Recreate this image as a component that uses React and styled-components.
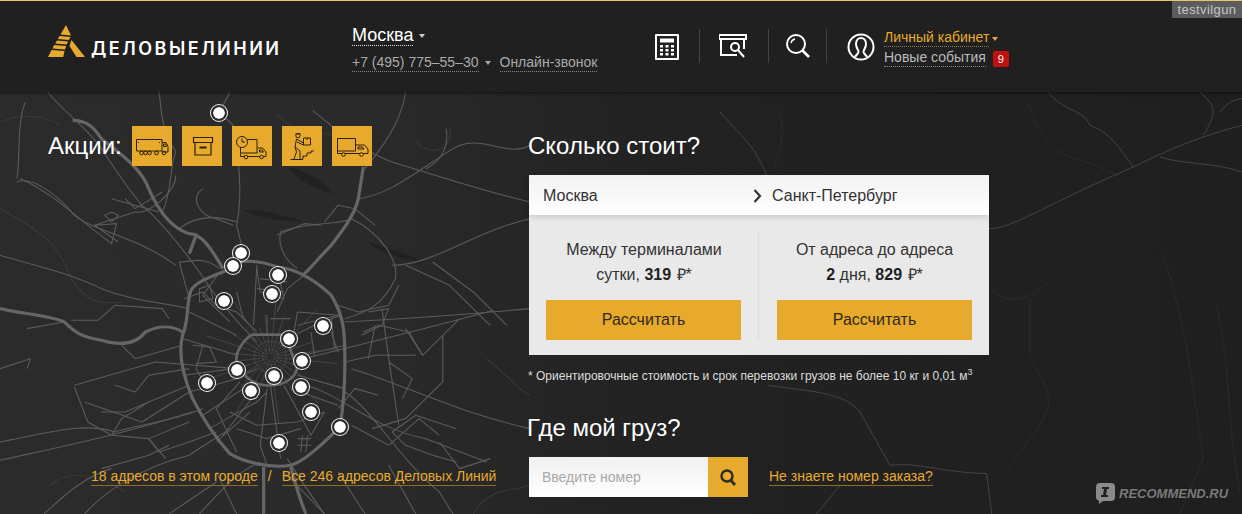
import styled, { createGlobalStyle } from 'styled-components';

const GlobalStyle = createGlobalStyle`
  html, body {
    margin: 0;
    padding: 0;
    background: #212121;
  }
  * {
    box-sizing: border-box;
  }
`

const Page = styled.div`
  position: relative;
  width: 1242px;
  height: 514px;
  overflow: hidden;
  font-family: "Liberation Sans", Arial, sans-serif;
  background: linear-gradient(90deg, #2b2b2b 0%, #2a2a2a 30%, #222 52%, #1f1f1f 100%);
`

const MapLayer = styled.svg`
  position: absolute;
  left: 0;
  top: 0;
  width: 1242px;
  height: 514px;
`

const Pin = styled.span`
  position: absolute;
  left: ${(p) => p.$x - 8}px;
  top: ${(p) => p.$y - 8}px;
  width: 16px;
  height: 16px;
  border-radius: 50%;
  background: #fff;
  background-clip: padding-box;
  border: 2px solid #2c2c2c;
  box-shadow: 0 0 0 1px #f0f0f0;
`

const Header = styled.header`
  position: relative;
  display: flex;
  align-items: flex-start;
  height: 92px;
  padding-left: 48px;
  background: #202020;
  border-top: 1px solid #e8c66e;
  box-shadow: 0 1px 3px rgba(0, 0, 0, 0.6);
`

const Logo = styled.div`
  display: flex;
  align-items: flex-end;
  gap: 5px;
  width: 304px;
  padding-top: 24px;
`

const LogoText = styled.span`
  font-family: Inter, "Liberation Sans", sans-serif;
  font-size: 18px;
  font-weight: 600;
  line-height: 18px;
  letter-spacing: 2.5px;
  color: #fff;
`

const CityBlock = styled.div`
  display: flex;
  flex-direction: column;
  width: 303px;
  padding-top: 23px;
`

const CityRow = styled.div`
  display: flex;
  align-items: center;
  gap: 6px;
  height: 23px;
`

const City = styled.span`
  font-size: 18px;
  line-height: 20px;
  color: #fff;
  border-bottom: 1px dotted #ddd;
`

const Caret = styled.span`
  width: 0;
  height: 0;
  margin-top: 1px;
  border-left: 3px solid transparent;
  border-right: 3px solid transparent;
  border-top: 4px solid ${(p) => p.$color || '#ccc'};
`

const PhoneRow = styled.div`
  display: flex;
  align-items: center;
  margin-top: 7px;
`

const Dotted = styled.span`
  font-size: 14px;
  line-height: 17px;
  color: ${(p) => p.$color || '#aaa'};
  border-bottom: 1px dotted ${(p) => p.$line || '#888'};
`

const PhoneCaret = styled(Caret)`
  margin: 0 9px 0 6px;
`

const Tools = styled.div`
  display: flex;
  align-items: flex-start;
  padding-top: 28px;
`

const ToolIcon = styled.svg`
  display: block;
  margin-top: ${(p) => p.$top || 5}px;
  color: #fff;
`

const ToolDivider = styled.span`
  width: 1px;
  height: 34px;
  background: #444;
  margin: 0 ${(p) => p.$right}px 0 ${(p) => p.$left}px;
`

const UserBlock = styled.div`
  display: flex;
  gap: 9px;
  margin-left: 20px;
`

const UserText = styled.div`
  display: flex;
  flex-direction: column;
  gap: 2px;
`

const UserRow = styled.div`
  display: flex;
  align-items: center;
  gap: 3px;
`

const Badge = styled.span`
  display: block;
  width: 16px;
  height: 16px;
  margin-left: 4px;
  margin-top: 2px;
  border-radius: 2px;
  background: #c40f0f;
  color: #fff;
  font-size: 11px;
  line-height: 16px;
  text-align: center;
`

const Main = styled.main`
  position: relative;
  display: grid;
  grid-template-columns: 480px 461px;
  height: 422px;
  padding: 34px 0 0 48px;
`

const LeftColumn = styled.section`
  display: flex;
  flex-direction: column;
  justify-content: space-between;
  height: 360px;
`

const PromoRow = styled.div`
  display: flex;
  align-items: center;
  gap: 10px;
`

const Title = styled.h2`
  margin: 0;
  font-size: 24px;
  font-weight: 400;
  line-height: 40px;
  color: #fff;
`

const PromoTitle = styled(Title)`
  width: 74px;
`

const PromoTile = styled.a`
  display: block;
  width: 40px;
  height: 40px;
  background: #e8aa2c;
  color: #2a2110;
`

const LinksRow = styled.div`
  display: flex;
  align-items: flex-start;
  gap: 10px;
  margin-left: 43px;
  font-size: 14px;
  line-height: 17px;
  color: #e8aa2c;
`

const AddressLink = styled.a`
  color: #e8aa2c;
  border-bottom: 1px solid #8f6c24;
`

const RightColumn = styled.section`
  display: flex;
  flex-direction: column;
`

const Card = styled.div`
  width: 460px;
  height: 180px;
  margin: 9px 0 0 1px;
  background: #e9e9e9;
`

const RouteRow = styled.div`
  position: relative;
  display: grid;
  grid-template-columns: 210px 1fr;
  height: 40px;
  padding: 1px 0 0 14px;
  align-items: center;
  font-size: 16px;
  color: #333;
  background: linear-gradient(180deg, #f2f2f2 0%, #fff 100%);
  box-shadow: 0 2px 6px rgba(0, 0, 0, 0.14);
`

const RouteTo = styled.div`
  display: flex;
  align-items: center;
  gap: 10px;
`

const Variants = styled.div`
  display: grid;
  grid-template-columns: 230px 230px;
  height: 140px;
`

const Variant = styled.div`
  padding: 22px 17px 0 ${(p) => (p.$last ? 18 : 17)}px;
  text-align: center;
  font-size: 16px;
  line-height: 25px;
  color: #333;
  ${(p) => !p.$last && 'background: linear-gradient(#dcdcdc, #dcdcdc) no-repeat right 15px / 1px 110px;'}
`

const Price = styled.b`
  color: #222;
`

const Ruble = styled.span`
  font-weight: 400;
  margin-left: 1px;
`

const CalcButton = styled.button`
  display: block;
  width: 195px;
  height: 40px;
  margin-top: 13px;
  padding: 0;
  border: 0;
  border-radius: 0;
  background: #e8aa2c;
  font-family: inherit;
  font-size: 16px;
  color: #33291a;
`

const Note = styled.p`
  margin: 14px 0 0;
  font-size: 12px;
  line-height: 14px;
  color: #ddd;
  white-space: nowrap;
  sup {
    font-size: 9px;
    line-height: 0;
  }
`

const TrackTitle = styled(Title)`
  margin: 29px 0 0 -1px;
  line-height: 32px;
`

const TrackRow = styled.div`
  display: flex;
  align-items: center;
  margin: 13px 0 0 1px;
`

const TrackInput = styled.input`
  width: 179px;
  height: 40px;
  padding: 0 13px;
  border: 0;
  border-radius: 0;
  outline: 0;
  background: linear-gradient(180deg, #f0f0f0 0%, #fff 100%);
  font-family: inherit;
  font-size: 14px;
  color: #333;
  &::placeholder {
    color: #a8a8a8;
    opacity: 1;
  }
`

const TrackButton = styled.button`
  display: flex;
  align-items: center;
  justify-content: center;
  width: 40px;
  height: 40px;
  padding: 0;
  border: 0;
  background: #e8aa2c;
`

const OrderLink = styled(AddressLink)`
  margin-left: 21px;
  font-size: 14px;
  line-height: 17px;
`

const UserTag = styled.div`
  position: absolute;
  right: 0;
  top: 1px;
  width: 70px;
  height: 17px;
  background: #5c5c5c;
  color: #c4c4c4;
  font-size: 13px;
  line-height: 17px;
  letter-spacing: 0.4px;
  text-align: center;
`

const Watermark = styled.div`
  position: absolute;
  left: 1095px;
  top: 482px;
  display: flex;
  align-items: center;
  gap: 3px;
  font-size: 13px;
  font-weight: 700;
  font-style: italic;
  line-height: 20px;
  color: #7a7a7a;
`

const pins = [
  [219, 113], [241, 253], [233, 266], [278, 275], [272, 294], [224, 301],
  [323, 326], [289, 339], [302, 361], [237, 370], [274, 376], [301, 387],
  [207, 383], [251, 391], [311, 412], [340, 427], [279, 443],
]

// coordinates below are traced from the picture, scaled up about 3x
const thickRoads = [
  'M660,540 C620,555 580,570 565,595 C550,640 560,680 540,730 C525,790 545,860 570,920 C600,980 640,1040 680,1085 C720,1110 800,1130 860,1120 C900,1110 960,1050 1006,1005 C1015,950 1022,880 1020,780 C1020,700 1010,660 980,610 C940,570 880,530 820,525 C780,510 740,505 710,510 C690,520 680,530 660,540',
  'M215,85 C260,85 280,110 300,140 C350,180 420,230 440,290 C470,360 510,410 560,425 C600,425 630,480 660,530',
  'M0,650 C60,665 150,670 190,690 C220,720 240,735 300,745 C350,760 400,760 430,720 C470,700 510,700 540,720',
  'M780,1125 L780,1266',
  'M860,1125 C875,1180 890,1230 905,1266',
  'M582,425 L560,485',
  'M1075,225 L1060,320 C1050,370 1010,420 980,460 C940,500 920,530 895,550',
]

const innerRing = 'M745,728 L840,728 C860,760 860,790 880,820 C880,850 850,880 800,880 C760,885 720,860 700,810 C695,780 720,745 745,728'

const thinRoads = [
  'M680,0 L650,60 L690,100 C705,200 720,300 700,400 L720,480',
  'M140,0 C200,70 260,110 300,170 C340,230 370,280 420,340 C480,390 540,470 590,540 C640,620 690,680 760,750',
  'M470,0 C480,50 470,100 520,180 C500,230 510,300 480,360',
  'M1200,0 C1190,60 1170,120 1080,230',
  'M925,55 C1000,120 1080,180 1160,210 C1260,240 1400,290 1568,330',
  'M1060,320 C1150,310 1230,240 1340,170 C1420,120 1500,200 1568,160',
  'M1020,690 C1200,680 1350,670 1568,650',
  'M900,800 C1100,750 1300,700 1460,655',
  'M0,490 C100,520 200,540 300,590 C400,630 480,630 560,650',
  'M0,1105 C200,1060 350,1030 570,960',
  'M250,1266 C300,1210 400,1130 560,1090 C600,1060 640,1040 680,1010',
  'M0,1050 C150,1020 250,990 340,1020 C400,1000 500,990 600,950',
  'M220,880 L460,810 L700,830',
  'M80,830 L90,800 L0,830',
  'M50,270 C100,250 180,320 220,370 C280,420 400,430 520,520',
  'M75,30 C50,90 60,200 50,260',
  'M1160,520 C1280,520 1400,420 1568,380',
  'M1020,900 C1100,950 1180,1100 1300,1200 L1340,1266',
  'M1040,830 C1200,880 1350,960 1568,1010',
  'M900,880 C1000,900 1100,1010 1260,1040 L1440,1110',
  'M1040,380 C1000,400 900,390 830,420 C820,470 850,510 880,530',
  'M1040,380 C1120,420 1180,500 1170,560 C1130,640 1090,660 1020,680',
  'M700,390 C640,370 580,370 530,410',
  'M600,290 C560,320 590,370 640,380 L690,400',
  'M520,250 C520,300 440,370 400,360 L280,400 L350,450',
  'M220,885 L260,990 L330,1030 L440,1040 L490,1100',
  'M250,930 L420,990 L560,900',
  'M1310,730 L1310,870 L1200,980 L1100,1010',
  'M1130,650 L1150,800 L1180,1000',
  'M1075,720 L1120,700 L1210,720 L1250,790',
  'M980,720 L1000,780 M880,700 L1000,670',
  'M650,530 C600,490 570,510 530,510 L560,620',
  'M760,520 L750,700 M790,670 L790,730 M860,680 L800,680',
  'M820,660 L850,590 L900,550',
  'M790,1120 L770,1060 L790,890',
  'M800,880 L830,1100 M840,880 L920,1030 L960,960',
  'M880,1040 L920,1040 M880,1060 L920,1060 M895,1030 L890,1080 M910,1030 L905,1080',
  'M700,1080 L640,950 L710,870',
  'M660,1030 L760,900',
  'M1000,950 L1050,890 L1120,910 M1160,1020 L1230,970 L1350,1010',
  'M1300,1050 L1360,1130 L1450,1100',
  'M440,1040 L560,990',
  'M130,1266 C200,1200 260,1150 330,1130',
  'M590,1266 C650,1200 700,1140 770,1110',
  'M960,1266 C920,1210 880,1150 850,1100',
  'M545,620 L600,600 L640,640 L700,660 L740,700',
  'M560,660 L700,730',
  'M540,740 L640,770 L700,790',
  'M600,760 L580,830 L620,900',
  'M545,850 L690,830',
  'M560,900 L700,860 L760,830',
  'M600,970 L720,890',
  'M620,1010 L760,930 L790,900',
  'M640,1050 L740,960',
  'M680,960 L760,1000 L880,990 L960,960',
  'M700,1010 L790,1040 L890,1010',
  'M860,890 L1000,940',
  'M880,850 L1020,890',
  'M900,790 L1020,760',
  'M850,740 L950,690 L1010,670',
  'M870,720 L880,660 L1005,670',
  'M920,720 L930,790 M980,680 L990,770',
  'M760,530 L770,600 L840,620 L820,530',
  'M770,560 L850,570 M760,590 L840,600',
  'M650,540 L600,610 L680,690',
  'M590,590 L620,580 L630,620 L590,630 Z',
  'M700,600 L720,680 L760,720',
  'M570,760 L620,765 L640,810 L580,815',
  'M60,260 C130,290 200,350 260,400 L330,455 L345,395 L280,400',
  'M310,370 L330,390 L350,370 L330,360 Z',
  'M370,320 L400,350 L480,300 M330,320 L470,360',
  'M210,685 L290,685 L340,640 L480,650 L500,680',
  'M80,710 L190,690',
  'M360,760 L400,800 L540,760',
  'M340,880 L400,900 L440,850 L560,830',
  'M300,960 L370,960 L440,930 L560,880',
  'M330,1030 L360,980 L440,930',
  'M440,1040 L470,1080 L560,1050 L640,1020',
  'M300,1130 L440,1090 L500,1060',
  'M1070,730 L1130,700 L1150,650 L1090,660',
  'M1020,810 L1110,790 L1230,790',
  'M1090,800 L1110,700',
  'M1200,710 L1250,790 L1310,730 L1360,680',
  'M1150,810 L1220,860 L1190,920',
  'M1040,1000 L1150,1060 L1240,980 L1300,1030',
  'M1160,1020 L1200,1060 L1280,1090 L1350,1110',
  'M960,390 L1000,340 L1050,350 L1110,400',
  'M820,430 L900,395 L950,400',
  'M1200,520 L1330,580 L1450,700',
  'M1280,510 L1400,600 L1500,700',
  'M1320,110 C1330,170 1300,210 1260,230',
  'M1000,640 L1060,660 L1150,640 L1180,580',
  'M640,1140 L700,1266',
  'M840,1140 L960,1266',
  'M500,1266 L640,1170',
  'M1000,1140 L1080,1266',
  'M1150,1120 L1230,1266',
]

const darkLines = [
  'M850,225 C900,235 950,260 985,305 C930,290 880,265 850,225',
  'M720,355 C770,345 830,375 900,385 C860,392 770,380 720,355',
  'M1090,450 C1140,470 1200,480 1250,510 C1190,505 1120,480 1090,450',
]

const faintLines = [
  'M0,350 C90,400 170,440 210,560 C250,620 280,640 360,630',
  'M0,90 C50,70 110,60 180,100',
  'M820,70 C880,130 960,110 1000,140',
  'M1330,110 C1340,170 1280,200 1230,150',
  'M150,1180 C200,1130 300,1150 370,1200',
  'M1400,1266 C1450,1180 1520,1200 1568,1180',
  'M1440,800 C1500,850 1540,900 1568,910',
]

const eastRoads = [
  'M805,410 C880,410 950,350 1240,225 C1350,170 1450,130 1566,100',
  'M985,0 C1030,60 1090,50 1110,100 C1170,120 1200,170 1240,225',
  'M1440,0 C1480,40 1500,50 1450,130',
  'M1500,60 C1530,20 1566,20 1570,20',
  'M1320,195 C1400,220 1480,210 1566,240',
  'M145,880 C280,900 370,900 420,960 L510,1120',
  'M510,1120 C600,1110 650,1140 800,1145 L815,1266',
  'M360,1180 L290,1266',
  'M0,60 C50,120 100,150 140,250',
]

const eastFaint = [
  'M1330,490 C1400,700 1420,900 1450,1100 L1380,1266',
  'M810,590 C880,660 960,600 1030,530',
  'M930,620 L930,800 C980,880 1010,920 960,1000 L850,1150',
  'M1490,640 C1530,800 1520,1000 1560,1200',
  'M180,70 C200,120 170,200 160,240',
  'M920,30 C960,120 980,170 1060,200 C1120,210 1160,240 1200,250',
]

const spokes = Array.from({ length: 28 }, (_, i) => {
  const a = (i / 28) * Math.PI * 2 + 0.1
  const r1 = i % 2 ? 30 : 10
  const r2 = i % 3 === 0 ? 200 : i % 2 ? 95 : 130
  return `M${800 + Math.cos(a) * r1},${795 + Math.sin(a) * r1} L${800 + Math.cos(a) * r2},${795 + Math.sin(a) * r2}`
})

function RoadMap() {
  return (
    <MapLayer viewBox="0 0 1242 514">
      <g transform="translate(0 92) scale(0.338 0.3333)" fill="none" strokeLinejoin="round">
        {darkLines.map((d) => <path key={d} d={d} fill="#212121" />)}
        {faintLines.map((d) => <path key={d} d={d} stroke="#3a3a3a" strokeWidth="3" />)}
        <g stroke="#5c5c5c" strokeWidth="3.2">
          {thinRoads.map((d) => <path key={d} d={d} />)}
        </g>
        <g stroke="#4c4c4c" strokeWidth="2.500">
          {spokes.map((d) => <path key={d} d={d} />)}
          <circle cx="800" cy="795" r="48" />
          <circle cx="800" cy="795" r="24" />
        </g>
        <g stroke="#666" strokeWidth="9.500">
          {thickRoads.map((d) => <path key={d} d={d} />)}
        </g>
        <path d={innerRing} stroke="#666" strokeWidth="8" />
      </g>
      <g transform="translate(720 92) scale(0.3333)" fill="none">
        {eastFaint.map((d) => <path key={d} d={d} stroke="#2b2b2b" strokeWidth="3" />)}
        {eastRoads.map((d) => <path key={d} d={d} stroke="#444" strokeWidth="3" />)}
      </g>
    </MapLayer>
  )
}

function LogoMark() {
  return (
    <svg width="38" height="33" viewBox="0 0 38 33" fill="#e8aa2c">
      <polygon points="18,0 12.5,9.5 23,10.5" />
      <polygon points="11.5,11 22.5,12 20.8,15 9.8,14" />
      <polygon points="9,15.5 20,16.5 18.7,19.5 7.2,18.5" />
      <polygon points="6.2,20 18.2,21 17,24.5 4.5,23.5" />
      <polygon points="3.6,25 16.5,26 15.2,32 0,32" />
      <polygon points="23.5,15 37,32 28.5,32 21.5,21" />
    </svg>
  )
}

function TruckLong() {
  return (
    <svg width="40" height="40" viewBox="0 0 40 40" fill="none" stroke="currentColor" strokeWidth="1">
      <path d="M4.5 13.5h25.5v11.5H4.5zM30 16.5h4l2 4v5.500H30" />
      <path d="M6 16l1 1M27 16l1 1M31.500 18h2l1 2.500h-3z" />
      <circle cx="9.500" cy="27" r="1.800" />
      <circle cx="13.500" cy="27" r="1.800" />
      <circle cx="17.500" cy="27" r="1.800" />
      <circle cx="24.500" cy="27" r="1.800" />
      <circle cx="32" cy="27" r="1.800" />
    </svg>
  )
}

function BoxIcon() {
  return (
    <svg width="40" height="40" viewBox="0 0 40 40" fill="none" stroke="currentColor" strokeWidth="1.200">
      <path d="M11.500 11.500h19v5h-19zM13 16.500v12.500h16V16.500" />
      <path d="M17.500 20.500h7v2h-7z" fill="currentColor" stroke="none" />
    </svg>
  )
}

function ClockTruck() {
  return (
    <svg width="40" height="40" viewBox="0 0 40 40" fill="none" stroke="currentColor" strokeWidth="1">
      <circle cx="10" cy="16" r="5.500" />
      <path d="M10 12.500V16h3M15 13.500h10v13.500M8.500 21.500V27h17" />
      <path d="M25.500 22h5l3.500 4v4.500H8.500V27.500" />
      <path d="M27.500 24h2.500l1.500 2h-4z" />
      <circle cx="14" cy="31" r="1.800" fill="#e8aa2c" />
      <circle cx="29.500" cy="31" r="1.800" fill="#e8aa2c" />
    </svg>
  )
}

function WorkerIcon() {
  return (
    <svg width="40" height="40" viewBox="0 0 40 40" fill="none" stroke="currentColor" strokeWidth="1">
      <circle cx="16" cy="9.500" r="2.200" />
      <path d="M13.500 8h5M21.500 12h7v7h-7zM25 12v2" />
      <path d="M14.500 13l-1.500 8 1.500 5-2.500 7M13 21l5 4v8M14.500 13l7 4M15 16l6.500 3" />
      <path d="M8.500 33.500H21M21 33v-3h4v-3h4v-2h3" />
    </svg>
  )
}

function TruckBox() {
  return (
    <svg width="40" height="40" viewBox="0 0 40 40" fill="none" stroke="currentColor" strokeWidth="1">
      <path d="M5.500 12.500h18v12.500h-18zM5.500 25v2.500h30.500v-4.500l-3.500-4h-9" />
      <path d="M26 21h4.500l1.500 2h-6z" />
      <circle cx="11.500" cy="28.500" r="1.800" fill="#e8aa2c" />
      <circle cx="29.500" cy="28.500" r="1.800" fill="#e8aa2c" />
    </svg>
  )
}

function CalculatorIcon() {
  return (
    <ToolIcon width="24" height="26" viewBox="0 0 24 26" fill="currentColor" $top={5}>
      <path d="M1 0h22a1 1 0 0 1 1 1v24a1 1 0 0 1-1 1H1a1 1 0 0 1-1-1V1a1 1 0 0 1 1-1zm1 2v22h20V2z" />
      <rect x="5" y="4.500" width="14" height="4" />
      <rect x="5" y="11" width="3" height="2.500" />
      <rect x="10.500" y="11" width="3" height="2.500" />
      <rect x="16" y="11" width="3" height="2.500" />
      <rect x="5" y="15" width="3" height="2.500" />
      <rect x="10.500" y="15" width="3" height="2.500" />
      <rect x="16" y="15" width="3" height="2.500" />
      <rect x="5" y="19" width="3" height="2.500" />
      <rect x="10.500" y="19" width="3" height="2.500" />
      <rect x="16" y="19" width="3" height="2.500" />
    </ToolIcon>
  )
}

function BoxSearchIcon() {
  return (
    <ToolIcon width="28" height="24" viewBox="0 0 28 24" fill="none" stroke="currentColor" strokeWidth="2" $top={5}>
      <path d="M0 1h27v4H0zM2 5v16h16M25 5v10" />
      <circle cx="16" cy="13" r="4" />
      <path d="M19 16l6 7" />
    </ToolIcon>
  )
}

function SearchIcon() {
  return (
    <ToolIcon width="24" height="24" viewBox="0 0 24 24" fill="none" stroke="currentColor" strokeWidth="2" $top={5}>
      <circle cx="10" cy="10" r="9" />
      <path d="M16.500 16.500l6.500 6.500" strokeWidth="2.600" />
      <path d="M5 9a5 5 0 0 1 4-4" strokeWidth="1.400" />
    </ToolIcon>
  )
}

function UserIcon() {
  return (
    <ToolIcon width="28" height="28" viewBox="0 0 28 28" fill="none" stroke="currentColor" strokeWidth="2" $top={4}>
      <circle cx="14" cy="14" r="12.500" />
      <path d="M8 24c1-2 3-3 3.500-5 .3-1.500-2.500-4-2.500-8 0-3.500 2-6 5-6s5 2.500 5 6c0 4-2.800 6.500-2.500 8 .5 2 2.500 3 3.500 5" />
    </ToolIcon>
  )
}

export default function App() {
  return (
    <Page>
      <GlobalStyle />
      <RoadMap />
      {pins.map(([x, y]) => <Pin key={`${x}-${y}`} $x={x} $y={y} />)}

      <Header>
        <Logo>
          <LogoMark />
          <LogoText>ДЕЛОВЫЕЛИНИИ</LogoText>
        </Logo>
        <CityBlock>
          <CityRow>
            <City>Москва</City>
            <Caret />
          </CityRow>
          <PhoneRow>
            <Dotted>+7 (495) 775–55–30</Dotted>
            <PhoneCaret $color="#aaa" />
            <Dotted>Онлайн-звонок</Dotted>
          </PhoneRow>
        </CityBlock>
        <Tools>
          <CalculatorIcon />
          <ToolDivider $left={20} $right={19} />
          <BoxSearchIcon />
          <ToolDivider $left={21} $right={17} />
          <SearchIcon />
          <ToolDivider $left={16} $right={0} />
          <UserBlock>
            <UserIcon />
            <UserText>
              <UserRow>
                <Dotted $color="#e8aa2c" $line="#8f7a4a">Личный кабинет</Dotted>
                <Caret $color="#e8aa2c" />
              </UserRow>
              <UserRow>
                <Dotted $color="#bbb">Новые события</Dotted>
                <Badge>9</Badge>
              </UserRow>
            </UserText>
          </UserBlock>
        </Tools>
      </Header>

      <Main>
        <LeftColumn>
          <PromoRow>
            <PromoTitle>Акции:</PromoTitle>
            <PromoTile><TruckLong /></PromoTile>
            <PromoTile><BoxIcon /></PromoTile>
            <PromoTile><ClockTruck /></PromoTile>
            <PromoTile><WorkerIcon /></PromoTile>
            <PromoTile><TruckBox /></PromoTile>
          </PromoRow>
          <LinksRow>
            <AddressLink>18 адресов в этом городе</AddressLink>
            <span>/</span>
            <AddressLink>Все 246 адресов Деловых Линий</AddressLink>
          </LinksRow>
        </LeftColumn>

        <RightColumn>
          <Title>Сколько стоит?</Title>
          <Card>
            <RouteRow>
              <span>Москва</span>
              <RouteTo>
                <svg width="9" height="14" viewBox="0 0 9 14" fill="none" stroke="#333" strokeWidth="2.200">
                  <path d="M1.500 1l5.500 6-5.500 6" />
                </svg>
                <span>Санкт-Петербург</span>
              </RouteTo>
            </RouteRow>
            <Variants>
              <Variant>
                Между терминалами<br />
                сутки, <Price>319</Price> <Ruble>₽</Ruble>*
                <CalcButton>Рассчитать</CalcButton>
              </Variant>
              <Variant $last>
                От адреса до адреса<br />
                <Price>2</Price> дня, <Price>829</Price> <Ruble>₽</Ruble>*
                <CalcButton>Рассчитать</CalcButton>
              </Variant>
            </Variants>
          </Card>
          <Note>* Ориентировочные стоимость и срок перевозки грузов не более 10 кг и 0,01 м<sup>3</sup></Note>
          <TrackTitle>Где мой груз?</TrackTitle>
          <TrackRow>
            <TrackInput placeholder="Введите номер" />
            <TrackButton>
              <svg width="16" height="17" viewBox="0 0 16 17" fill="none" stroke="#2b2b2b" strokeWidth="2.400">
                <circle cx="7" cy="7" r="5.500" />
                <path d="M10.500 11l4.500 5" strokeWidth="2.800" />
              </svg>
            </TrackButton>
            <OrderLink>Не знаете номер заказа?</OrderLink>
          </TrackRow>
        </RightColumn>
      </Main>

      <UserTag>testvilgun</UserTag>
      <Watermark>
        <svg width="21" height="23" viewBox="0 0 21 23">
          <path d="M5 1h11a4 4 0 0 1 4 4v10a4 4 0 0 1-4 4H8l-4 3v-3.200A4 4 0 0 1 1 15V5a4 4 0 0 1 4-4z" fill="#8a8a8a" />
          <path d="M7 5h7v2h-2l-1 6h2v2H6v-2h2l1-6H7z" fill="#222" />
        </svg>
        RECOMMEND.RU
      </Watermark>
    </Page>
  )
}
